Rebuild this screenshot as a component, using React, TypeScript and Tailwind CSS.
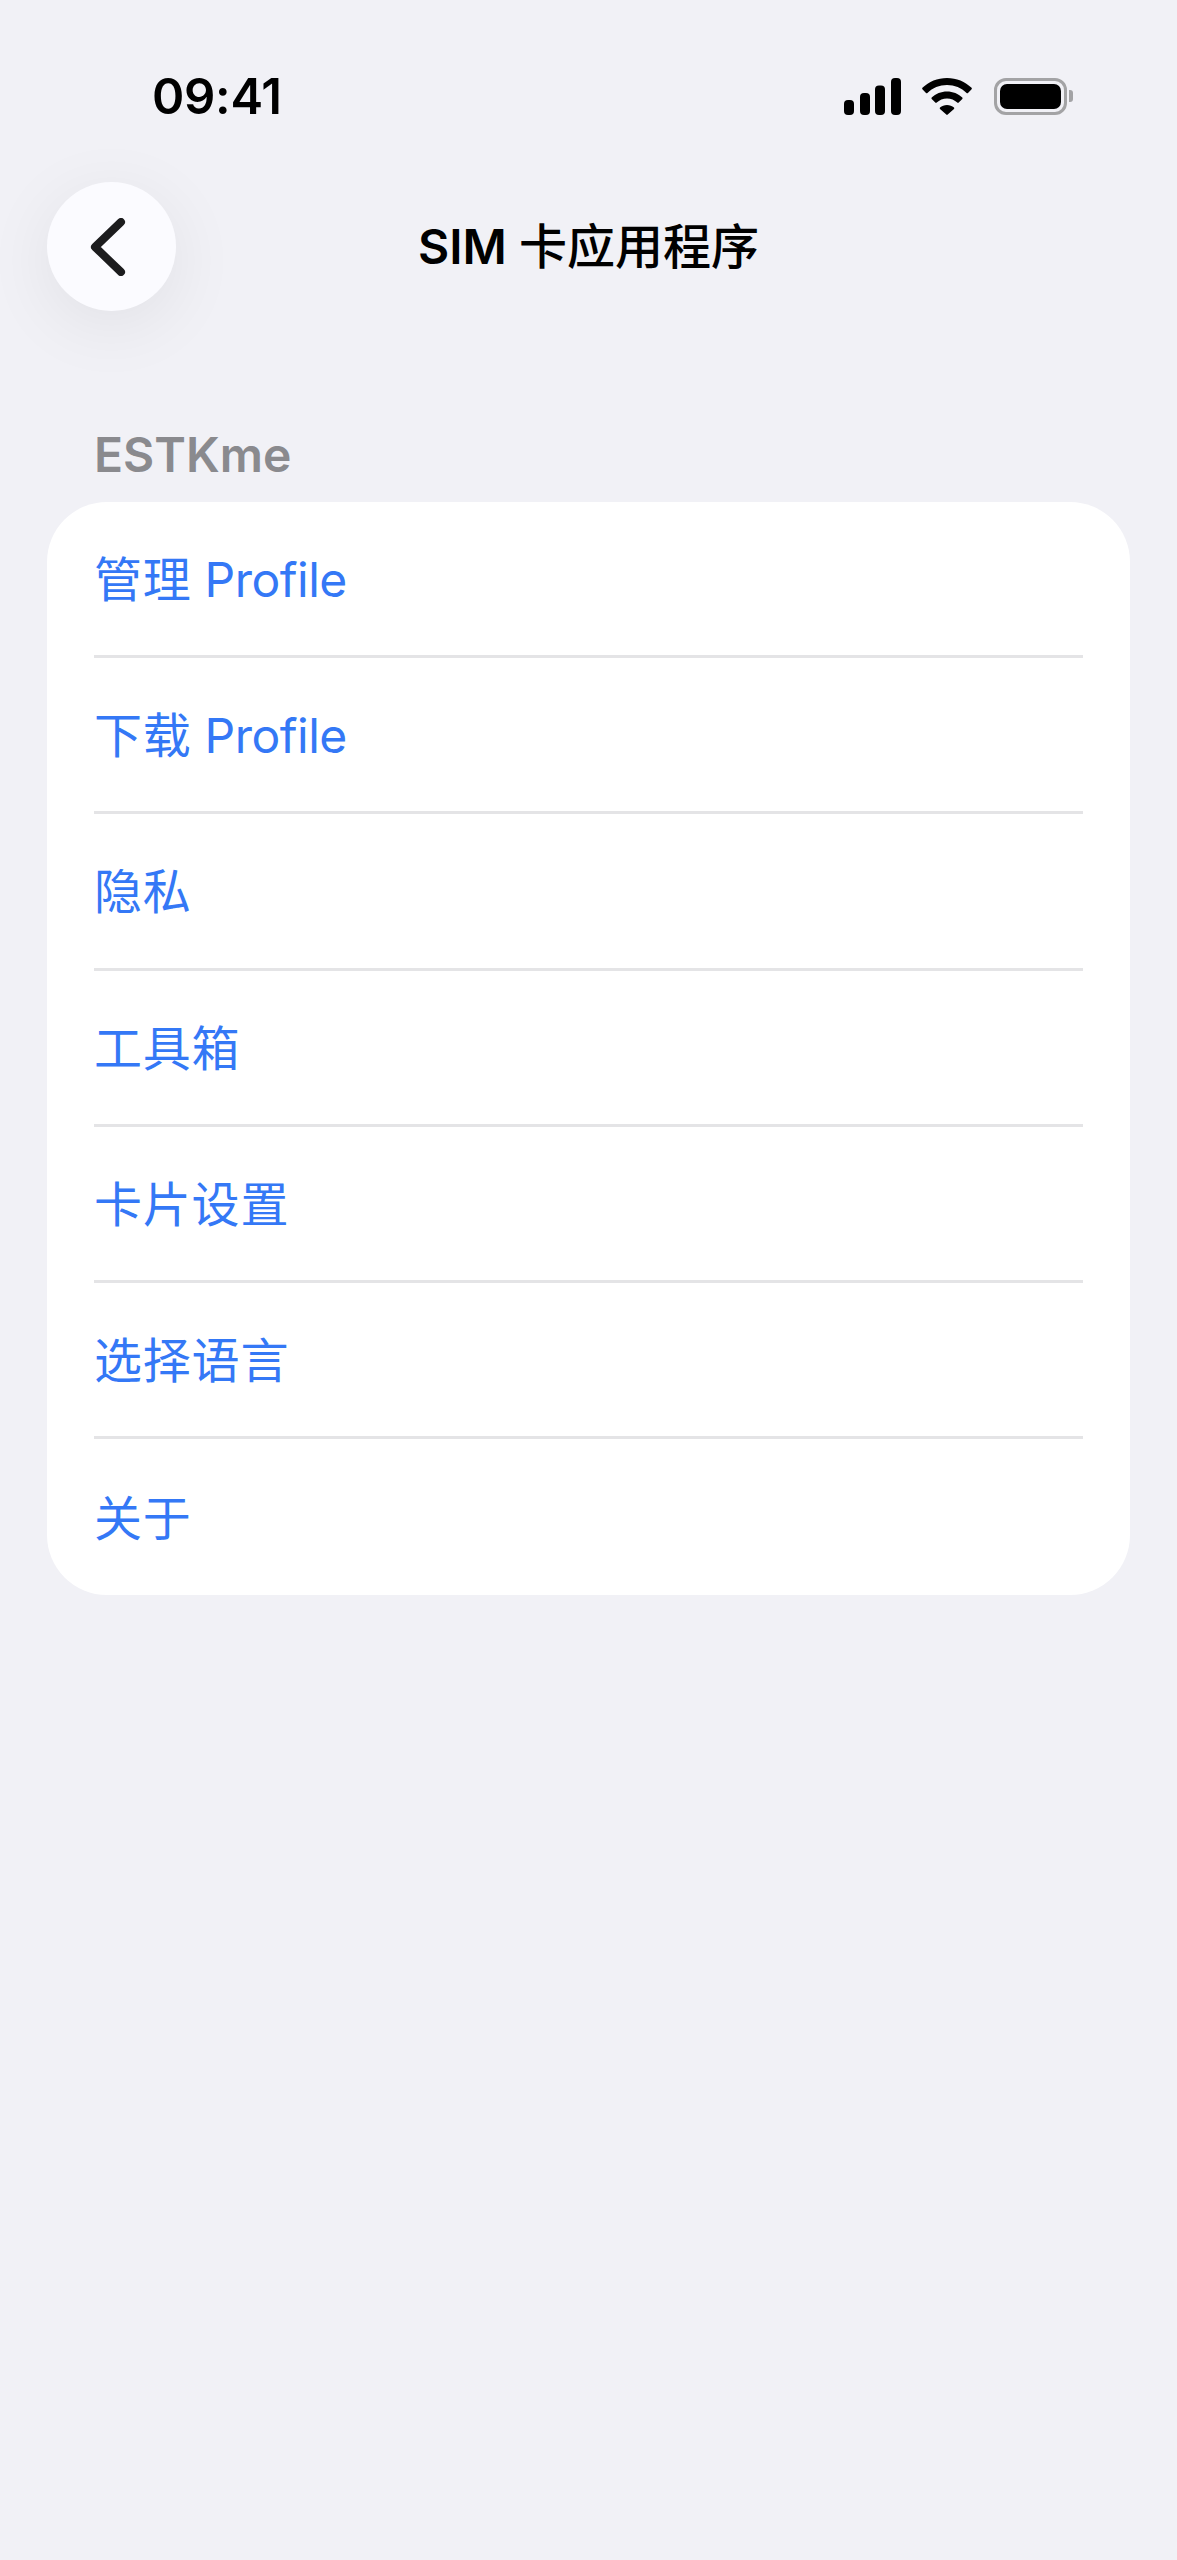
import React from "react";

const rows = [
  { zh: "管理", en: "Profile" },
  { zh: "下载", en: "Profile" },
  { zh: "隐私" },
  { zh: "工具箱" },
  { zh: "卡片设置" },
  { zh: "选择语言" },
  { zh: "关于" },
];

function SignalIcon() {
  return (
    <svg width="57" height="37" viewBox="0 0 57 37" fill="#000">
      <rect x="0" y="22" width="10" height="15" rx="4" />
      <rect x="16" y="15" width="10" height="22" rx="4" />
      <rect x="31" y="7.5" width="10" height="29.5" rx="4" />
      <rect x="47" y="0" width="10" height="37" rx="4" />
    </svg>
  );
}

function WifiIcon() {
  return (
    <svg width="50" height="37" viewBox="0 0 50 37" fill="#000">
      <path d="M25 0C34.5 0 43.2 3.7 49.6 9.8C50 10.2 50 10.8 49.6 11.2L46 14.9C45.6 15.3 45 15.3 44.6 14.9C39.4 10 32.5 7 25 7C17.5 7 10.6 10 5.4 14.9C5 15.3 4.4 15.3 4 14.9L.4 11.2C0 10.8 0 10.2.4 9.8C6.8 3.7 15.5 0 25 0Z" />
      <path d="M25 13.5C30.9 13.5 36.3 15.8 40.3 19.5C40.7 19.9 40.7 20.5 40.3 20.9L36.7 24.6C36.3 25 35.7 25 35.3 24.6C32.6 22.1 29 20.5 25 20.5C21 20.5 17.4 22.1 14.7 24.6C14.3 25 13.7 25 13.3 24.6L9.7 20.9C9.3 20.5 9.3 19.9 9.7 19.5C13.7 15.8 19.1 13.5 25 13.5Z" />
      <path d="M25 27C27.7 27 30.1 28 32 29.6C32.4 30 32.4 30.6 32 31L25.7 36.6C25.3 37 24.7 37 24.3 36.6L18 31C17.6 30.6 17.6 30 18 29.6C19.9 28 22.3 27 25 27Z" />
    </svg>
  );
}

function BatteryIcon() {
  return (
    <div className="flex items-center gap-[2px]">
      <div className="w-[73px] h-[37px] rounded-[12px] border-[3px] border-[#a3a3a5] p-[3px]">
        <div className="w-full h-full rounded-[7px] bg-black" />
      </div>
      <div className="w-[4px] h-[12px] rounded-r-[3px] bg-[#a3a3a5]" />
    </div>
  );
}

export default function App() {
  return (
    <div
      className="w-[1177px] h-[2560px] bg-[#f1f1f6] overflow-hidden"
      style={{ fontFamily: 'Inter, "Noto Sans CJK SC", sans-serif' }}
    >
      {/* status bar */}
      <div className="h-[182px] pl-[152px] pr-[104px] pt-[66px]">
        <div className="flex items-center justify-between h-[60px]">
          <span className="text-[49px] leading-none font-semibold text-black tracking-[-0.3px]">09:41</span>
          <div className="flex items-center">
            <SignalIcon />
            <div className="w-[21px]" />
            <WifiIcon />
            <div className="w-[22px]" />
            <BatteryIcon />
          </div>
        </div>
      </div>

      {/* nav */}
      <div className="relative h-[129px] mx-[47px] flex items-center justify-center">
        <div className="absolute left-0 top-0 w-[129px] h-[129px] rounded-full bg-[#fbfbff] flex items-center justify-center shadow-[0_14px_70px_rgba(0,0,0,0.07)]">
          <svg width="36" height="58" viewBox="0 0 36 58" fill="none" className="mr-[8px]">
            <path d="M31 4L5 29L31 54" stroke="#1c1c1e" strokeWidth="8" strokeLinecap="round" strokeLinejoin="round" />
          </svg>
        </div>
        <span className="flex items-baseline text-[48px] leading-none text-black mt-[1px]">
          <span className="font-semibold mr-[12px]">SIM</span>
          <span className="font-medium">卡应用程序</span>
        </span>
      </div>

      {/* section */}
      <div className="pt-[116px] px-[47px]">
        <div className="pl-[47px] text-[48px] leading-[56px] h-[55px] font-semibold text-[#8a8a8e] mb-[20px]">ESTKme</div>
        <div className="rounded-[60px] bg-white px-[47px]">
          {rows.map((row, i) => (
            <div
              key={row.zh}
              className={`h-[156.2px] pt-[3px] flex items-center text-[48px] leading-none text-[#3478f6] ${
                i < rows.length - 1 ? "border-b-[3px] border-[#e4e4e6]" : ""
              }`}
            >
              <span className="tracking-[0.8px]">{row.zh}</span>
              {row.en && <span className="ml-[13px] tracking-[-0.5px]">{row.en}</span>}
            </div>
          ))}
        </div>
      </div>
    </div>
  );
}
